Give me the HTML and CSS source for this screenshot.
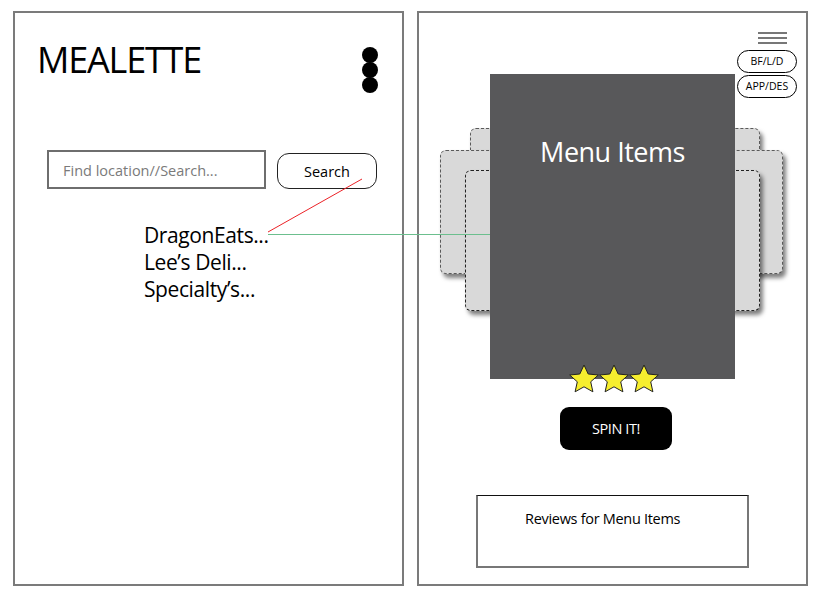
FILE: index.html
```html
<!DOCTYPE html>
<html lang="en">
<head>
  <meta charset="UTF-8">
  <title>Mealette</title>
  <link rel="stylesheet" href="styles.css">
</head>
<body>
  <!-- Ecran 1 : recherche -->
  <div class="screen">
    <div class="brandRow">
      <h1 class="brand">MEALETTE</h1>
      <div class="dots"><span></span><span></span><span></span></div>
    </div>

    <div class="searchRow">
      <input class="searchInput" type="text" placeholder="Find location//Search...">
      <button class="searchButton">Search</button>
    </div>

    <ul class="results">
      <li>DragonEats...</li>
      <li>Lee’s Deli...</li>
      <li>Specialty’s...</li>
    </ul>
  </div>

  <!-- Ecran 2 : roulette -->
  <div class="screen screenSpin">
    <div class="toolbar">
      <div class="burger"><span></span><span></span><span></span></div>
      <button class="pill">BF/L/D</button>
      <button class="pill">APP/DES</button>
    </div>

    <div class="carousel">
      <div class="ghost ghostTop"></div>
      <div class="ghost ghostWide"></div>
      <div class="ghost ghostFront"></div>
      <div class="menuCard">Menu Items</div>
    </div>

    <div class="stars">
      <svg viewBox="0 0 30 29"><polygon points="15,1 19.2,10 29.3,11 21.7,17.8 23.9,27.8 15,22.8 6.1,27.8 8.3,17.8 0.7,11 10.8,10"/></svg>
      <svg viewBox="0 0 30 29"><polygon points="15,1 19.2,10 29.3,11 21.7,17.8 23.9,27.8 15,22.8 6.1,27.8 8.3,17.8 0.7,11 10.8,10"/></svg>
      <svg viewBox="0 0 30 29"><polygon points="15,1 19.2,10 29.3,11 21.7,17.8 23.9,27.8 15,22.8 6.1,27.8 8.3,17.8 0.7,11 10.8,10"/></svg>
    </div>

    <button class="spinButton">SPIN IT!</button>

    <div class="reviews">Reviews for Menu Items</div>
  </div>

  <!-- Fleches de liaison entre les ecrans -->
  <svg class="links" width="823" height="600" viewBox="0 0 823 600">
    <line x1="362" y1="179" x2="268" y2="232" stroke="#ec2227" stroke-width="1"/>
    <line x1="268" y1="234.5" x2="490" y2="234.5" stroke="#6cbf8e" stroke-width="1.2"/>
  </svg>
</body>
</html>
```

FILE: styles.css
```css
* {
  box-sizing: border-box;
  font-family: "Open Sans", "Liberation Sans", sans-serif;
}
body {
  margin: 0;
  padding: 11px 13px;
  display: flex;
  gap: 13px;
  background: white;
  color: black;
  position: relative;
}

/* Les deux ecrans */
.screen {
  width: 391px;
  height: 575px;
  border: 2px solid #7b7b7b;
  display: flex;
  flex-direction: column;
}

.brandRow {
  display: flex;
  justify-content: space-between;
  align-items: flex-start;
  padding: 29px 24px 0 22px;
}
.brand {
  margin: 0;
  font-size: 36px;
  line-height: 36px;
  font-weight: normal;
  letter-spacing: -1.2px;
}
.dots {
  display: flex;
  flex-direction: column;
  margin-top: 6px;
}
.dots span {
  width: 16px;
  height: 16px;
  border-radius: 50%;
  background: black;
  margin-top: -1px;
}

/* Recherche */
.searchRow {
  display: flex;
  align-items: flex-end;
  margin: 57px 0 0 32px;
}
.searchInput {
  width: 219px;
  height: 39px;
  border: 2px solid #6e6e6e;
  padding: 2px 0 0 14px;
  font-size: 14.5px;
  outline: none;
}
.searchInput::placeholder {
  color: #7a7a7a;
}
.searchButton {
  margin-left: 11px;
  width: 100px;
  height: 36px;
  border: 1px solid #222;
  border-radius: 12px;
  background: white;
  font-size: 14.5px;
  color: black;
  padding: 0;
}

.results {
  list-style: none;
  margin: 33px 0 0 0;
  padding: 0 0 0 129px;
}
.results li {
  font-size: 21px;
  line-height: 27px;
  letter-spacing: -0.4px;
}

/* Ecran roulette */
.screenSpin {
  position: relative;
  align-items: center;
}
.toolbar {
  position: absolute;
  top: 19px;
  right: 9px;
  display: flex;
  flex-direction: column;
  align-items: flex-end;
  gap: 2px;
}
.burger {
  display: flex;
  flex-direction: column;
  gap: 3.5px;
  margin: 0 10px 4px 0;
}
.burger span {
  width: 29px;
  height: 1.5px;
  background: #777;
}
.pill {
  width: 60px;
  height: 23px;
  border: 1px solid black;
  border-radius: 12px;
  background: white;
  font-size: 10.5px;
  color: black;
  padding: 0;
}

.carousel {
  position: relative;
  width: 245px;
  height: 305px;
  margin-top: 61px;
}
.ghost {
  position: absolute;
  background: #d9d9d9;
  border: 1.5px dashed #5a5a5a;
  border-radius: 6px;
  box-shadow: 3px 4px 4px rgba(0, 0, 0, 0.5);
}
.ghostTop {
  left: -20px;
  top: 54px;
  width: 290px;
  height: 140px;
}
.ghostWide {
  left: -50px;
  top: 76px;
  width: 343px;
  height: 124px;
}
.ghostFront {
  left: -25px;
  top: 96px;
  width: 295px;
  height: 141px;
  border-color: #222;
}
.menuCard {
  position: relative;
  height: 100%;
  background: #58585a;
  color: white;
  font-size: 27px;
  line-height: 32px;
  text-align: center;
  padding-top: 62px;
  letter-spacing: -0.5px;
}

.stars {
  display: flex;
  margin: -15px 0 0 2px;
  position: relative;
}
.stars svg {
  width: 30px;
  height: 29px;
}
.stars polygon {
  fill: #f6ee2e;
  stroke: #222;
  stroke-width: 1;
  stroke-linejoin: round;
}

.spinButton {
  margin: 14px 0 0 7px;
  width: 112px;
  height: 43px;
  border: none;
  border-radius: 9px;
  background: black;
  color: white;
  font-size: 14.5px;
  letter-spacing: -0.4px;
  padding: 0;
}

.reviews {
  margin-top: 45px;
  width: 273px;
  height: 73px;
  border: 2px solid #777;
  border-top: 1.5px solid #111;
  padding: 13px 0 0 47px;
  font-size: 14.5px;
  line-height: 20px;
  letter-spacing: -0.3px;
}

/* Lignes d'annotation */
.links {
  position: absolute;
  left: 0;
  top: 0;
  pointer-events: none;
}
```
